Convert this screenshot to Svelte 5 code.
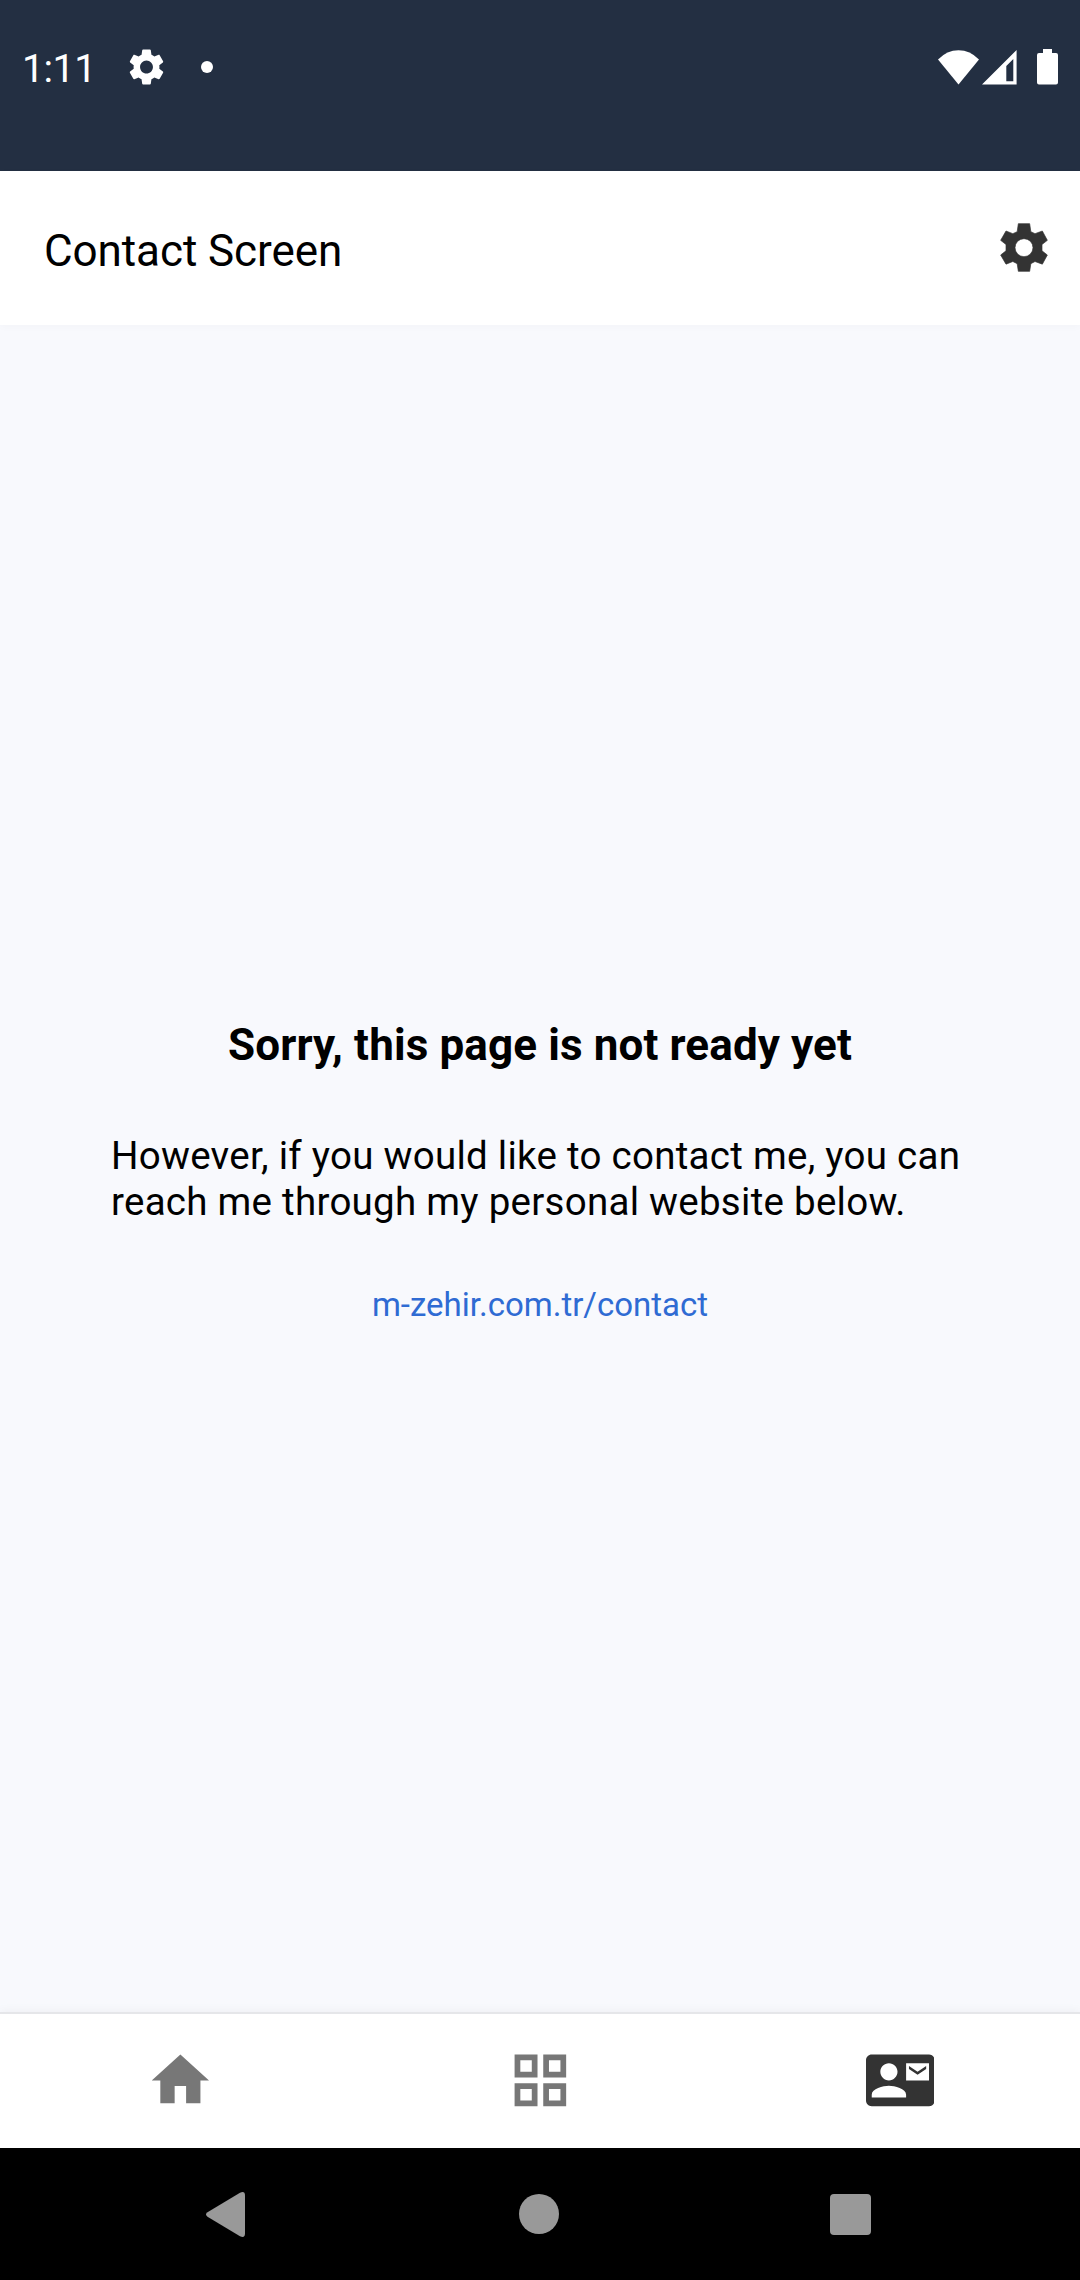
<script>
  const tabs = [
    {
      name: 'Home',
      active: false,
      path: 'M10 20v-6h4v6h5v-8h3L12 3 2 12h3v8z'
    },
    {
      name: 'Projects',
      active: false,
      path: 'M3 3v8h8V3H3zm6 6H5V5h4v4zm-6 4v8h8v-8H3zm6 6H5v-4h4v4zm4-16v8h8V3h-8zm6 6h-4V5h4v4zm-6 4v8h8v-8h-8zm6 6h-4v-4h4v4z'
    },
    {
      name: 'Contact',
      active: true,
      path: 'M21 8V7l-3 2-3-2v1l3 2 3-2zm1-5H2C.9 3 0 3.9 0 5v14c0 1.1.9 2 2 2h20c1.1 0 1.99-.9 1.99-2L24 5c0-1.1-.9-2-2-2zM8 6c1.66 0 3 1.34 3 3s-1.34 3-3 3-3-1.34-3-3 1.34-3 3-3zm6 12H2v-1c0-2 4-3.1 6-3.1s6 1.1 6 3.1v1zm8-6h-8V6h8v6z'
    }
  ];
</script>

<div class="screen">
  <div class="status">
    <div class="group">
      <span class="clock">1:11</span>
      <svg class="status-gear" viewBox="0 0 24 24" preserveAspectRatio="none">
        <path d="M19.14 12.94c.04-.3.06-.61.06-.94 0-.32-.02-.64-.07-.94l2.03-1.58c.18-.14.23-.41.12-.61l-1.92-3.32c-.12-.22-.37-.29-.59-.22l-2.39.96c-.5-.38-1.03-.7-1.62-.94l-.36-2.54c-.04-.24-.24-.41-.48-.41h-3.84c-.24 0-.43.17-.47.41l-.36 2.54c-.59.24-1.13.57-1.62.94l-2.39-.96c-.22-.08-.47 0-.59.22L2.74 8.87c-.12.21-.08.47.12.61l2.03 1.58c-.05.3-.09.63-.09.94s.02.64.07.94l-2.03 1.58c-.18.14-.23.41-.12.61l1.92 3.32c.12.22.37.29.59.22l2.39-.96c.5.38 1.03.7 1.62.94l.36 2.54c.05.24.24.41.48.41h3.84c.24 0 .44-.17.47-.41l.36-2.54c.59-.24 1.13-.56 1.62-.94l2.39.96c.22.08.47 0 .59-.22l1.92-3.32c.12-.22.07-.47-.12-.61l-2.01-1.58zM12 15.6c-1.98 0-3.6-1.62-3.6-3.6s1.62-3.6 3.6-3.6 3.6 1.62 3.6 3.6-1.62 3.6-3.6 3.6z" />
      </svg>
      <span class="dot"></span>
    </div>
    <div class="group">
      <svg class="wifi" viewBox="0 0 41 35"><path d="M0 9.5Q9 .3 20.5 .3T41 9.5L20.5 34.5z" /></svg>
      <svg class="signal" viewBox="0 0 35 35"><path fill-rule="evenodd" d="M34.6 0V34.6H0zM31.3 9L24.3 16V31.3H31.3z" /></svg>
      <svg class="battery" viewBox="0 0 21 36"><path d="M6 0h9v4h4a2 2 0 0 1 2 2v27.500a2 2 0 0 1-2 2H2a2 2 0 0 1-2-2V6a2 2 0 0 1 2-2h4z" /></svg>
    </div>
  </div>

  <header>
    <h1>Contact Screen</h1>
    <svg class="settings" viewBox="120 70 144 147">
      <path fill-rule="evenodd" stroke-linejoin="round" d="M175 72H209L212.500 96L225 102L247 94L262 122L246 134.500V153.500L262 166L247 193.500L225 185.500L212.500 192L209 215H175L171.500 192L158.500 185.500L138 193.500L122 166L138 153.500V134.500L122 122L138 94L158.500 102L171.500 96zM192 117a27 27 0 1 0 0 54a27 27 0 1 0 0-54z" />
    </svg>
  </header>

  <main>
    <h2>Sorry, this page is not ready yet</h2>
    <p>However, if you would like to contact me, you can reach me through my personal website below.</p>
    <span class="link">m-zehir.com.tr/contact</span>
  </main>

  <nav class="tabs">
    {#each tabs as tab (tab.name)}
      <button class:active={tab.active} aria-label={tab.name}>
        <svg viewBox="0 0 24 24"><path d={tab.path} /></svg>
      </button>
    {/each}
  </nav>

  <div class="system">
    <svg class="back" viewBox="0 0 39 45"><path d="M1.500 20.300L34 .700Q39-1.500 39 3.500V41.500Q39 46.500 34 44.300L1.500 24.700Q-1.500 22.500 1.500 20.300z" /></svg>
    <span class="circle"></span>
    <span class="square"></span>
  </div>
</div>

<style>
  :global(body) {
    margin: 0;
    background: #f8f9fd;
  }

  .screen {
    display: flex;
    flex-direction: column;
    width: 1080px;
    height: 2280px;
    overflow: hidden;
    background: #f8f9fd;
    color: #000;
    font-family: Roboto, sans-serif;
  }

  svg {
    display: block;
    flex: none;
  }

  .status {
    display: flex;
    justify-content: space-between;
    align-items: flex-start;
    box-sizing: border-box;
    flex: none;
    height: 171px;
    padding: 43px 22px 0;
    background: #232f42;
    color: #fff;
    fill: #fff;
  }

  .group {
    display: flex;
    align-items: center;
    height: 48px;
  }

  .clock {
    width: 103px;
    padding-top: 4px;
    font-size: 39.5px;
    letter-spacing: -0.6px;
    line-height: 48px;
  }

  .status-gear {
    width: 43px;
    height: 44px;
  }

  .dot {
    width: 12px;
    height: 12px;
    margin-left: 33px;
    border-radius: 50%;
    background: #fff;
  }

  .wifi {
    width: 41px;
    height: 35px;
  }

  .signal {
    width: 35px;
    height: 35px;
    margin-left: 3px;
  }

  .battery {
    width: 21px;
    height: 36px;
    margin-left: 20px;
  }

  header {
    display: flex;
    align-items: center;
    justify-content: space-between;
    box-sizing: border-box;
    flex: none;
    height: 154px;
    padding: 0 32px 0 44px;
    background: #fff;
    box-shadow: 0 2px 8px rgba(0, 0, 0, 0.025);
    z-index: 1;
  }

  h1 {
    margin: 5px 0 0;
    font-size: 44px;
    font-weight: 400;
    letter-spacing: -0.08px;
    line-height: 52px;
  }

  .settings {
    width: 48px;
    height: 49px;
    margin-bottom: 1px;
    fill: #333;
    stroke: #333;
    stroke-width: 2px;
  }

  main {
    display: flex;
    flex: 1;
    flex-direction: column;
    align-items: center;
    padding: 0 110px;
  }

  h2 {
    margin: 694px 0 0;
    font-size: 44px;
    font-weight: 700;
    letter-spacing: 0.12px;
    line-height: 52px;
  }

  p {
    width: 858px;
    margin: 62px 0 0;
    font-size: 38.5px;
    letter-spacing: 0.27px;
    line-height: 46px;
  }

  .link {
    margin-top: 60px;
    color: #2f6bd3;
    font-size: 33px;
    line-height: 40px;
  }

  .tabs {
    display: flex;
    box-sizing: border-box;
    flex: none;
    height: 134px;
    padding-bottom: 1px;
    background: #fff;
    box-shadow: 0 -2px 0 #e5e6e9, 0 -2px 10px rgba(0, 0, 0, 0.06);
  }

  button {
    display: flex;
    flex: 1;
    align-items: center;
    justify-content: center;
    padding: 0;
    border: 0;
    background: none;
    fill: #777;
  }

  .active {
    fill: #333;
  }

  button svg {
    width: 68.75px;
    height: 68.75px;
  }

  .system {
    display: flex;
    align-items: center;
    justify-content: space-between;
    box-sizing: border-box;
    flex: none;
    height: 132px;
    padding: 0 209px 0 206px;
    background: #000;
    fill: #999;
  }

  .back {
    width: 39px;
    height: 45px;
  }

  .circle {
    width: 40px;
    height: 40px;
    margin-left: 3px;
    border-radius: 50%;
    background: #999;
  }

  .square {
    width: 41px;
    height: 41px;
    margin-top: 1px;
    border-radius: 4px;
    background: #999;
  }
</style>
